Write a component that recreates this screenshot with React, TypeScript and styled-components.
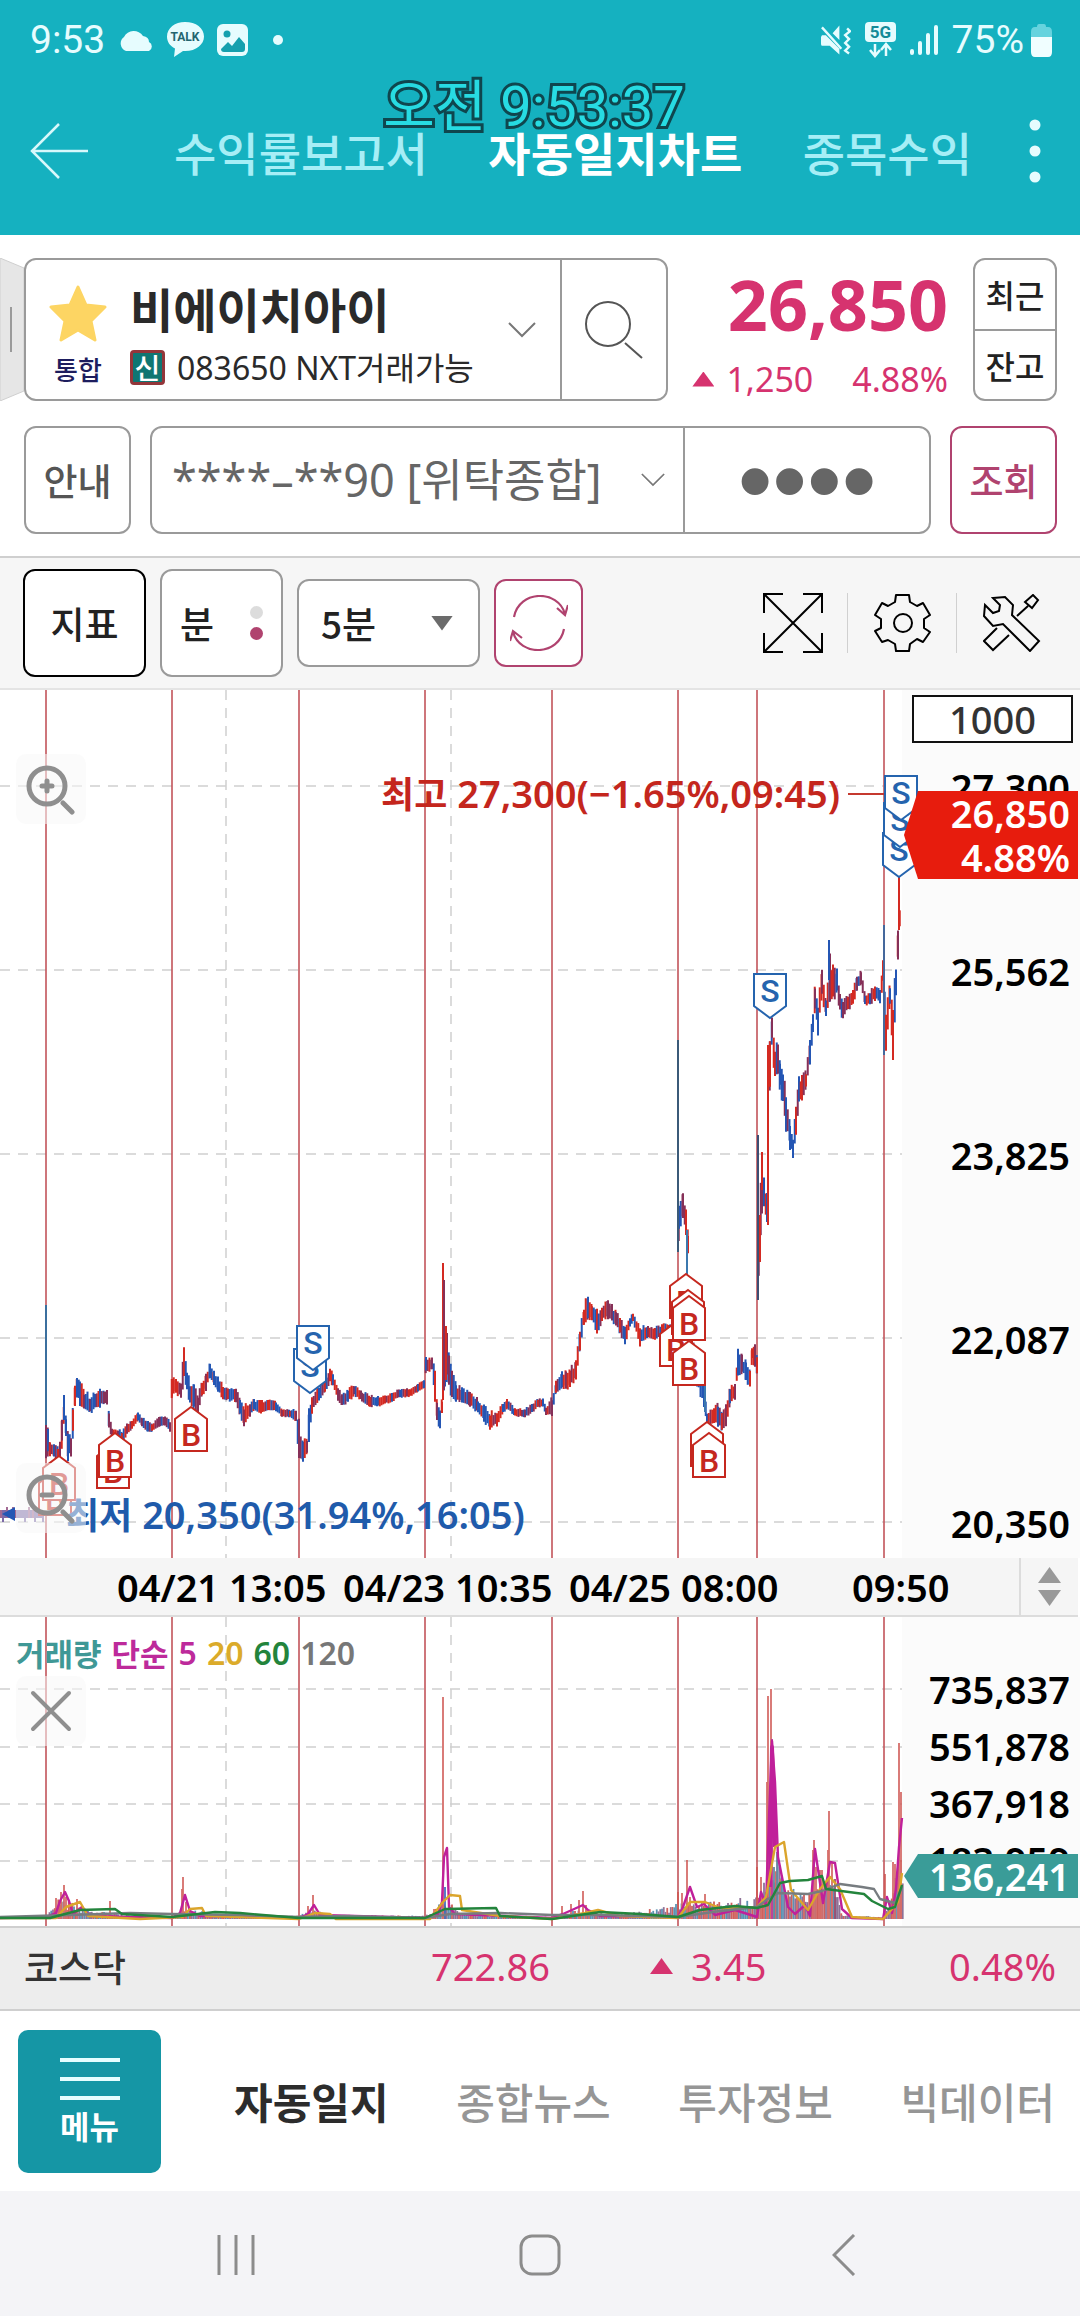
import React from "react";
import styled, { createGlobalStyle, css } from "styled-components";

const SANS = `"Noto Sans", "Noto Sans CJK KR", sans-serif`;
const KR = `"Noto Sans CJK KR", "Noto Sans", sans-serif`;
const PINK = "#d6336f";
const ROSE = "#b0436f";
const GREY = "#9a9a9a";

const GlobalStyle = createGlobalStyle`
  * { box-sizing: border-box; }
  body { margin: 0; background: #fff; font-family: ${SANS}; color: #222; }
  button, input, select { font: inherit; color: inherit; margin: 0; padding: 0; border: 0; background: none; border-radius: 0; appearance: none; outline: none; }
  a { color: inherit; text-decoration: none; }
  svg { display: block; }
`;

const Screen = styled.div`
  display: flex;
  flex-direction: column;
  min-height: 100vh;
  overflow: hidden;
`;

/* ---------- header ---------- */
const Header = styled.header`
  position: relative;
  background: #15b1c0;
  color: #fff;
  height: 235px;
  display: flex;
  flex-direction: column;
`;
const StatusBar = styled.div`
  display: flex;
  align-items: center;
  justify-content: space-between;
  height: 80px;
  padding: 0 28px 0 30px;
  font: 39px/44px Roboto, sans-serif;
  color: #e6fcfe;
`;
const StatusGroup = styled.div<{ $gap: number }>`
  display: flex;
  align-items: center;
  gap: ${(p) => p.$gap}px;
`;
const BatteryText = styled.span`
  display: flex;
  align-items: center;
  gap: 7px;
`;
const TopNav = styled.nav`
  display: flex;
  align-items: center;
  height: 142px;
  padding: 0 26px 0 30px;
`;
const TopTabs = styled.div`
  flex: 1;
  display: flex;
  justify-content: space-between;
  padding: 0 44px 0 86px;
`;
const TopTab = styled.a<{ $active?: boolean }>`
  font: ${(p) => (p.$active ? 700 : 500)} 46px/60px ${KR};
  color: ${(p) => (p.$active ? "#fff" : "#a6eef6")};
  white-space: nowrap;
`;
const IconButton = styled.button`
  display: grid;
  place-items: center;
  cursor: pointer;
`;
const ClockOverlay = styled.time`
  position: absolute;
  top: 73px;
  left: 50%;
  transform: translateX(-50%);
  margin-left: -6px;
  font: 400 56px/68px Roboto, "Noto Sans CJK KR", sans-serif;
  color: #27dbe2;
  -webkit-text-stroke: 6px #0f464e;
  paint-order: stroke fill;
  white-space: nowrap;
`;

/* ---------- stock and account ---------- */
const StockRow = styled.section`
  position: relative;
  display: flex;
  align-items: stretch;
  height: 143px;
  margin: 23px 23px 0 24px;
`;
const DrawerHandle = styled.button`
  position: absolute;
  left: -24px;
  top: 0;
  width: 24px;
  height: 143px;
`;
const Framed = styled.div`
  display: flex;
  border: 2px solid ${GREY};
  border-radius: 12px;
  background: #fff;
  overflow: hidden;
`;
const StockCard = styled(Framed)`
  flex: 0 1 644px;
  z-index: 1;
`;
const Favourite = styled.button`
  display: flex;
  flex-direction: column;
  align-items: center;
  width: 104px;
  padding-top: 25px;
  gap: 11px;
  font: 500 26px/32px ${KR};
  color: #1d1d5e;
`;
const StockButton = styled.button`
  flex: 1;
  display: flex;
  align-items: center;
  text-align: left;
  padding-right: 24px;
`;
const StockNames = styled.span`
  flex: 1;
  display: flex;
  flex-direction: column;
  gap: 8px;
  padding-top: 4px;
`;
const StockName = styled.span`
  font: 700 47px/64px ${KR};
  color: #2a2a2a;
`;
const StockCode = styled.span`
  display: flex;
  align-items: center;
  gap: 12px;
  font: 400 32px/40px ${SANS};
  color: #2a2a2a;
  white-space: nowrap;
`;
const CreditBadge = styled.span`
  width: 35px;
  height: 35px;
  border: 3px solid #93363a;
  border-radius: 4px;
  background: #0f7672;
  color: #fff;
  font: 500 28px/29px ${KR};
  text-align: center;
`;
const SearchButton = styled(IconButton)`
  width: 106px;
  border-left: 2px solid ${GREY};
`;
const PriceBlock = styled.div`
  flex: 1;
  display: flex;
  flex-direction: column;
  align-items: flex-end;
  padding-right: 25px;
  color: ${PINK};
`;
const Price = styled.strong`
  font: 700 70px/92px ${SANS};
`;
const Change = styled.div`
  display: flex;
  align-items: center;
  gap: 39px;
  font: 400 34px/58px ${SANS};
`;
const ChangeValue = styled.span`
  display: flex;
  align-items: center;
  gap: 12px;
`;
const Triangle = styled.i<{ $size: number; $color?: string; $down?: boolean }>`
  width: ${(p) => p.$size}px;
  height: ${(p) => Math.round(p.$size * 0.7)}px;
  background: ${(p) => p.$color || PINK};
  clip-path: ${(p) => (p.$down ? "polygon(0 0, 100% 0, 50% 100%)" : "polygon(50% 0, 100% 100%, 0 100%)")};
`;
const SideButtons = styled(Framed)`
  width: 84px;
  flex-direction: column;
  font: 500 32px/40px ${KR};
`;
const SideButton = styled.button`
  flex: 1;
  & + & { border-top: 2px solid ${GREY}; }
`;
const AccountRow = styled.section`
  display: flex;
  height: 108px;
  gap: 19px;
  margin: 25px 23px 22px 24px;
`;
const OutlineButton = styled.button<{ $color: string; $text?: string }>`
  width: 107px;
  border: 2px solid ${(p) => p.$color};
  border-radius: 12px;
  background: #fff;
  color: ${(p) => p.$text || p.$color};
  font: 500 37px/48px ${KR};
`;
const AccountBox = styled(Framed)`
  flex: 1;
`;
const SelectWrap = styled.label`
  flex: 1;
  display: flex;
  align-items: center;
  padding: 0 18px 0 20px;
`;
const AccountSelect = styled.select`
  flex: 1;
  min-width: 0;
  font: 400 45px/60px ${SANS};
  color: #666;
`;
const Password = styled.input`
  width: 246px;
  border-left: 2px solid ${GREY};
  text-align: center;
  font: 99px/104px "Liberation Sans", sans-serif;
  color: #666;
`;

/* ---------- toolbar ---------- */
const Toolbar = styled.section`
  display: flex;
  align-items: center;
  justify-content: space-between;
  height: 134px;
  padding: 0 39px 0 23px;
  background: #f6f6f6;
  border-top: 2px solid #cfcfcf;
  border-bottom: 2px solid #e4e4e4;
`;
const ToolGroup = styled.div`
  display: flex;
  align-items: center;
  gap: 14px;
`;
const ToolButton = styled.button<{ $color: string }>`
  display: flex;
  align-items: center;
  justify-content: center;
  gap: 36px;
  width: 123px;
  height: 108px;
  border: 2px solid ${(p) => p.$color};
  border-radius: 12px;
  background: #fff;
  font: 500 37px/48px ${KR};
`;
const Dots = styled.span`
  display: grid;
  gap: 8px;
`;
const Dot = styled.i<{ $on?: boolean }>`
  width: 13px;
  height: 13px;
  border-radius: 50%;
  background: ${(p) => (p.$on ? ROSE : "#dcdcdc")};
`;
const PeriodBox = styled.label`
  display: flex;
  align-items: center;
  width: 183px;
  height: 88px;
  padding: 0 25px 0 22px;
  border: 2px solid ${GREY};
  border-radius: 12px;
  background: #fff;
`;
const PeriodSelect = styled.select`
  flex: 1;
  min-width: 0;
  font: 500 37px/48px ${KR};
`;
const RefreshButton = styled(IconButton)`
  width: 89px;
  height: 88px;
  border: 2px solid ${ROSE};
  border-radius: 12px;
  background: #fff;
`;
const Actions = styled.div`
  display: flex;
  align-items: center;
`;
const Action = styled(IconButton)`
  height: 60px;
  & + & {
    border-left: 1px solid #d0d0d0;
    margin-left: 24px;
    padding-left: 26px;
  }
`;

/* ---------- charts ---------- */
const ChartRow = styled.section`
  position: relative;
  display: flex;
  background: #fbfbfb;
`;
const Plot = styled.svg`
  flex: 1;
  min-width: 0;
  height: auto;
  overflow: visible;
  background: #fff;
`;
const AxisCss = css`
  position: relative;
  flex: 0 0 178px;
  display: flex;
  flex-direction: column;
  align-items: flex-end;
  padding-right: 10px;
  font: 600 38px/44px ${SANS};
  color: #000;
`;
const PriceAxis = styled.div`
  ${AxisCss}
  padding-top: 5px;
  gap: 140px;
`;
const VolumeAxis = styled.div`
  ${AxisCss}
  padding-top: 50px;
  gap: 13px;
`;
const CountInput = styled.input`
  width: 161px;
  height: 48px;
  margin: 0 -3px -118px 0;
  border: 2px solid #111;
  background: #fff;
  text-align: center;
  font: 500 38px/44px ${SANS};
  color: #333;
`;
const Tag = styled.div<{ $top: number; $bg: string }>`
  position: absolute;
  top: ${(p) => p.$top}px;
  left: 2px;
  right: 2px;
  padding-right: 8px;
  background: ${(p) => p.$bg};
  color: #fff;
  text-align: right;
  clip-path: polygon(0 50%, 14px 0, 100% 0, 100% 100%, 14px 100%);
`;
const ChartTool = styled.button<{ $top: number }>`
  position: absolute;
  left: 16px;
  top: ${(p) => p.$top}px;
  width: 70px;
  height: 70px;
  display: grid;
  place-items: center;
  border-radius: 10px;
  background: rgba(247, 247, 247, 0.55);
`;
const DateBar = styled.div`
  display: flex;
  align-items: center;
  height: 59px;
  padding-left: 117px;
  margin-right: 2px;
  background: #f5f5f5;
  border-bottom: 2px solid #dcdcdc;
  font: 600 38px/56px ${SANS};
  color: #000;
`;
const DateLabel = styled.span<{ $width: number }>`
  width: ${(p) => p.$width}px;
  white-space: nowrap;
`;
const Stepper = styled.button`
  margin-left: auto;
  width: 59px;
  height: 100%;
  border-left: 2px solid #dcdcdc;
  display: flex;
  flex-direction: column;
  align-items: center;
  justify-content: center;
  gap: 7px;
`;
const Legend = styled.div`
  position: absolute;
  top: 14px;
  left: 16px;
  display: flex;
  gap: 10px;
  font: 600 32px/44px ${SANS};
`;
const LegendItem = styled.span<{ $color: string; $bold?: boolean }>`
  color: ${(p) => p.$color};
  ${(p) => p.$bold && `font: 700 31px/44px ${KR};`}
`;

/* ---------- footer ---------- */
const IndexBar = styled.section`
  display: grid;
  grid-template-columns: 407px 219px 1fr auto;
  align-items: center;
  height: 85px;
  padding: 0 24px 5px;
  background: #ededed;
  border-top: 2px solid #cfcfcf;
  border-bottom: 2px solid #cfcfcf;
  font: 400 38px/52px ${SANS};
  color: ${PINK};
`;
const IndexName = styled.span`
  font: 500 37px/52px ${KR};
  color: #333;
`;
const IndexChange = styled.span`
  display: flex;
  align-items: center;
  gap: 18px;
`;
const BottomNav = styled.nav`
  display: flex;
  align-items: center;
  height: 180px;
  padding: 0 25px 0 18px;
`;
const MenuButton = styled.button`
  width: 143px;
  height: 143px;
  border-radius: 10px;
  background: #1596a5;
  color: #fff;
  display: flex;
  flex-direction: column;
  align-items: center;
  justify-content: center;
  gap: 4px;
  font: 700 32px/40px ${KR};
`;
const BottomTabs = styled.div`
  flex: 1;
  display: flex;
  justify-content: space-between;
  padding-left: 73px;
`;
const BottomTab = styled.a<{ $active?: boolean }>`
  font: ${(p) => (p.$active ? 700 : 500)} 42px/60px ${KR};
  color: ${(p) => (p.$active ? "#2c2c2c" : "#969696")};
`;
const SystemNav = styled.nav`
  flex: 1;
  min-height: 126px;
  display: grid;
  grid-template-columns: repeat(3, 1fr);
  align-items: center;
  padding: 2px 84px 0;
  background: #f4f4f7;
`;

/* ---------- chart data ---------- */
const SESSIONS = [46, 172, 299, 425, 552, 678, 757, 884];
const RED = "#d42a22";
const BLUE = "#2456b4";
const PURPLE = "#863058";

// x, high, low of the price envelope
const ENVELOPE: number[][] = [
  [46, 732, 772], [48, 740, 765], [50, 752, 766], [54, 755, 765], [58, 758, 770], [60, 750, 770], [62, 730, 755], [64, 712, 730],
  [66, 722, 750], [68, 745, 770], [71, 745, 765], [73, 710, 750], [75, 695, 715], [77, 686, 710], [80, 690, 715], [84, 700, 720],
  [90, 705, 725], [95, 703, 720], [100, 698, 716], [104, 702, 715], [107, 700, 715], [109, 722, 740], [112, 740, 750], [118, 742, 750],
  [122, 740, 755], [127, 735, 742], [132, 732, 738], [138, 722, 730], [142, 728, 735], [148, 732, 740], [152, 735, 740], [160, 728, 735],
  [165, 728, 734], [170, 732, 740], [172, 685, 705], [176, 688, 702], [181, 690, 710], [184, 658, 690], [187, 680, 702], [190, 692, 715],
  [194, 695, 720], [198, 705, 722], [202, 692, 705], [206, 682, 700], [210, 674, 688], [214, 682, 694], [218, 688, 700], [223, 695, 710],
  [228, 698, 710], [236, 698, 712], [240, 710, 725], [244, 715, 735], [250, 715, 725], [254, 710, 720], [262, 712, 722], [268, 710, 718],
  [276, 712, 720], [282, 720, 725], [290, 721, 726], [296, 720, 730], [299, 730, 770], [303, 750, 770], [307, 750, 762], [309, 720, 750],
  [312, 705, 722], [325, 690, 700], [330, 678, 692], [333, 682, 695], [338, 698, 710], [342, 705, 715], [348, 700, 712], [354, 695, 705],
  [362, 702, 710], [370, 706, 716], [378, 708, 715], [385, 707, 713], [392, 704, 710], [400, 700, 706], [410, 700, 705], [418, 696, 700],
  [424, 690, 698], [426, 668, 680], [432, 668, 680], [435, 680, 710], [437, 710, 730], [440, 715, 740], [442, 710, 722], [445, 640, 700],
  [447, 645, 690], [449, 662, 700], [452, 680, 710], [456, 695, 710], [462, 698, 712], [470, 702, 715], [478, 710, 722], [484, 715, 732],
  [490, 722, 738], [497, 722, 735], [503, 715, 722], [507, 710, 717], [515, 720, 725], [525, 720, 726], [532, 715, 722], [538, 710, 715],
  [543, 710, 716], [546, 718, 725], [552, 708, 725], [556, 692, 702], [562, 680, 698], [566, 682, 698], [570, 678, 698], [576, 672, 690],
  [580, 640, 660], [584, 615, 635], [588, 604, 628], [592, 615, 630], [597, 620, 645], [602, 615, 630], [608, 612, 628], [612, 615, 630],
  [616, 622, 636], [620, 628, 642], [625, 638, 655], [630, 628, 635], [633, 625, 630], [640, 636, 655], [648, 638, 646], [655, 638, 650],
  [662, 635, 645], [670, 635, 642], [677, 630, 640], [679, 510, 540], [683, 505, 530], [686, 520, 545], [688, 540, 570], [690, 640, 680],
  [704, 690, 715], [707, 722, 735], [718, 712, 735], [722, 722, 740], [726, 715, 740], [730, 695, 715], [735, 690, 710], [738, 660, 685],
  [742, 665, 682], [746, 672, 690], [750, 680, 698], [752, 655, 670], [755, 652, 678], [757, 665, 685], [759, 525, 572], [762, 465, 525],
  [764, 485, 525], [767, 500, 530], [768, 360, 430], [770, 335, 410], [772, 325, 350], [775, 355, 395], [778, 348, 385], [780, 370, 400],
  [783, 372, 415], [786, 405, 440], [790, 430, 460], [793, 447, 467], [796, 415, 445], [799, 385, 415], [802, 385, 410], [806, 380, 398],
  [810, 350, 375], [813, 320, 340], [815, 290, 320], [818, 310, 345], [822, 280, 310], [826, 305, 330], [830, 265, 310], [833, 270, 310],
  [837, 278, 305], [840, 305, 320], [843, 310, 330], [848, 305, 320], [853, 300, 315], [857, 285, 300], [861, 282, 295], [865, 305, 315],
  [870, 302, 313], [875, 295, 310], [880, 300, 312], [883, 270, 295], [886, 320, 360], [890, 290, 320], [893, 310, 360], [896, 270, 310],
  [898, 235, 270], [901, 195, 225],
];

// x, high, low, colour of the long single bars
const SPIKES: [number, number, number, string][] = [
  [46, 615, 735, "#3b6f9e"], [64, 705, 730, BLUE], [443, 573, 710, RED], [444, 590, 700, PURPLE], [446, 636, 690, RED],
  [678, 350, 562, "#3b5a78"], [687, 540, 585, "#3b78ae"], [705, 695, 722, "#3b78ae"], [758, 445, 610, "#3d4d72"], [760, 525, 572, RED],
  [768, 355, 535, RED], [762, 462, 500, RED], [829, 250, 290, BLUE], [884, 235, 365, "#45689c"], [893, 320, 370, RED], [899, 185, 240, RED],
];

const noise = (seed: number) => {
  const v = Math.sin(seed * 127.1 + 11.7) * 43758.5453;
  return v - Math.floor(v);
};

type Bar = { x: number; y1: number; y2: number; color: string };

const candles: Bar[] = [];
for (let i = 0; i < ENVELOPE.length - 1; i++) {
  const [x0, h0, l0] = ENVELOPE[i];
  const [x1, h1, l1] = ENVELOPE[i + 1];
  for (let x = x0; x < x1; x += 1.75) {
    const t = (x - x0) / (x1 - x0);
    const high = h0 + (h1 - h0) * t;
    const low = l0 + (l1 - l0) * t;
    const r = noise(x + i);
    const size = low - high;
    const a = high - 2 + size * 0.35 * noise(x * 3 + 1);
    const b = low + 2 - size * 0.3 * noise(x * 5 + 2);
    const falling = h1 > h0 + 2;
    const color = r < 0.3 ? PURPLE : r < (falling ? 0.5 : 0.72) ? RED : BLUE;
    candles.push({ x, y1: a, y2: Math.max(b, a + 4), color });
  }
}
for (let x = 1; x < 45; x += 2) {
  candles.push({ x, y1: 820 + (noise(x) > 0.8 ? -3 : 0), y2: 828 + (noise(x) < 0.2 ? 4 : 0), color: noise(x) > 0.5 ? "#a36a94" : "#7c6aa8" });
}

type Mark = [kind: "B" | "S", x: number, tip: number];
const MARKS: Mark[] = [
  ["B", 55, 781], ["B", 59, 766], ["B", 113, 754], ["B", 115, 743], ["B", 191, 717],
  ["S", 310, 703], ["S", 313, 680],
  ["B", 676, 632], ["B", 686, 584], ["B", 688, 600], ["B", 689, 606], ["B", 689, 651], ["B", 707, 732], ["B", 709, 743],
  ["S", 770, 328], ["S", 899, 187], ["S", 900, 157], ["S", 901, 130],
];

const TradeMark = ({ mark: [kind, x, tip] }: { mark: Mark }) => {
  const buy = kind === "B";
  const s = buy ? 1 : -1;
  const color = buy ? "#c5281f" : "#2564ae";
  return (
    <g>
      <path
        d={`M${x} ${tip}L${x + 16} ${tip + s * 12}V${tip + s * 44}H${x - 16}V${tip + s * 12}Z`}
        fill="#fff"
        stroke={color}
        strokeWidth={2}
      />
      <text x={x} y={buy ? tip + 39 : tip - 16} textAnchor="middle" fontSize={32} fontWeight={500} fontFamily="Roboto, sans-serif" fill={color}>
        {kind}
      </text>
    </g>
  );
};

const Grid = ({ rows, height }: { rows: number[]; height: number }) => (
  <>
    <g stroke="#cfcfcf" strokeWidth={1.5} strokeDasharray="10 8">
      {rows.map((y) => <path key={y} d={`M0 ${y}H902`} />)}
      {[226, 451].map((x) => <path key={x} d={`M${x} 0V${height}`} />)}
    </g>
    <g stroke="#c2545a" strokeWidth={1.6}>
      {SESSIONS.map((x) => <path key={x} d={`M${x} 0V${height}`} />)}
    </g>
  </>
);

const PriceChart = () => (
  <Plot viewBox="0 0 902 868" role="img" aria-label="비에이치아이 5분 차트">
    <Grid rows={[96, 280, 464, 648, 832]} height={868} />
    <g strokeWidth={2}>
      {candles.map((c, i) => <path key={i} d={`M${c.x} ${c.y1}V${c.y2}`} stroke={c.color} />)}
      {SPIKES.map(([x, a, b, color], i) => <path key={i} d={`M${x} ${a}V${b}`} stroke={color} />)}
    </g>
    {MARKS.map((m, i) => <TradeMark key={i} mark={m} />)}
    <path d="M848 104H884" stroke="#c5392f" strokeWidth={2} />
    <path d="M2 824L15 817V831Z" fill={BLUE} />
    <g fontSize={38} fontWeight={600} fontFamily={SANS}>
      <text x={840} y={118} textAnchor="end" fill="#c4261d">
        <tspan fontWeight={700} fontSize={36}>최고</tspan> 27,300(−1.65%,09:45)
      </text>
      <text x={66} y={839} fill="#1f5bab">
        <tspan fontWeight={700} fontSize={36}>최저</tspan> 20,350(31.94%,16:05)
      </text>
    </g>
  </Plot>
);

// x, top of the tall volume bars
const VOLUME: [number, number, string?][] = [
  [56, 281], [59, 288], [61, 275], [64, 268], [66, 280], [70, 290], [77, 282], [110, 284], [182, 272], [183, 260], [186, 285],
  [308, 289], [313, 278], [434, 292], [443, 80], [445, 270, BLUE], [562, 289], [571, 287], [579, 283], [583, 274], [586, 288], [678, 275], [682, 276],
  [687, 243], [690, 280], [705, 277], [710, 287], [737, 287], [757, 250], [761, 260], [764, 285], [767, 165], [768, 79], [771, 72], [772, 122, "#b0208f"],
  [774, 250, "#4f7590"], [777, 235, "#4f7590"], [780, 262], [813, 233], [814, 223], [816, 250], [820, 253], [822, 253], [828, 233],
  [829, 194], [832, 245], [835, 262, PURPLE], [885, 257], [893, 245], [895, 247], [898, 250], [899, 126], [901, 175],
];

const volumeFloor: Bar[] = [];
const FLOOR = [[46, 2], [60, 20], [90, 8], [130, 4], [172, 3], [190, 10], [215, 5], [299, 3], [313, 10], [330, 4], [425, 3], [445, 18], [465, 5], [552, 2], [575, 8], [620, 4], [678, 14], [700, 16], [757, 22], [776, 68], [790, 30], [812, 24], [830, 50], [836, 28], [842, 4], [883, 2], [890, 22], [901, 60], [903, 60]];
for (let i = 0; i < FLOOR.length - 1; i++) {
  const [x0, a] = FLOOR[i];
  const [x1, b] = FLOOR[i + 1];
  for (let x = x0; x < x1; x += 1.75) {
    const h = (a + ((b - a) * (x - x0)) / (x1 - x0)) * (0.5 + noise(x) * 0.6);
    const r = noise(x * 7);
    volumeFloor.push({ x, y1: 302 - h, y2: 302, color: r < 0.35 ? "#c8453f" : r < 0.6 ? "#3f7fa6" : "#7c5a86" });
  }
}

const VolumeChart = () => (
  <Plot viewBox="0 0 902 309" role="img" aria-label="거래량 차트">
    <Grid rows={[72, 130, 187, 244]} height={309} />
    <g strokeWidth={1.8} opacity={0.85}>
      {volumeFloor.map((c, i) => <path key={i} d={`M${c.x} ${c.y1}V${c.y2}`} stroke={c.color} />)}
      {VOLUME.map(([x, y, color], i) => <path key={i} d={`M${x} ${y}V302`} stroke={color || "#cf5550"} />)}
    </g>
    <g fill="none" strokeWidth={2.4} strokeLinejoin="round">
      <path stroke="#c0209a" d="M0 301L46 300L56 296L60 284L65 275L69 284L73 297L82 290L90 299L172 301L180 296L185 278L190 294L200 299L299 301L308 297L314 288L320 298L425 301L438 297L442 285L444 240L447 231L449 290L455 297L552 301L563 297L583 288L588 293L600 299L678 300L683 290L690 270L697 290L704 287L715 298L735 293L757 300L761 275L766 288L769 200L772 124L775 165L778 240L788 290L795 297L805 288L810 299L815 232L823 286L830 245L835 246L842 292L852 301L883 302L887 280L892 296L896 272L899 230L902 201" />
      <path stroke="#c0209a" strokeWidth={4} d="M770 270L772 130L775 230" />
      <path stroke="#dba52c" d="M0 301H56L66 290L80 285L88 299L140 302L182 300L190 292L202 291L206 299L299 302L315 296L330 297L336 302L430 302L443 285L450 278L460 279L462 293L500 299L552 302L585 296L598 293L620 299L678 301L690 285L705 285L720 291L757 290L766 280L775 230L784 225L791 273L808 293L820 272L830 260L840 272L852 300L883 302L893 291L898 285L902 256" />
      <path stroke="#777c80" d="M0 300L70 298L130 296L172 297L240 298L299 300L345 299L425 301L450 297L500 296L552 298L600 298L678 300L720 294L757 290L768 282L778 276L808 277L822 274L840 267L862 270L874 272L880 282L895 286L902 270" />
      <path stroke="#23843c" d="M0 301H50L80 293L115 292L122 297L172 300L215 295L240 296L299 301L425 301L445 292L496 291L500 299L552 302L600 295L640 297L678 300L700 293L735 289L757 291L768 288L780 266L790 264L808 263L822 259L826 272L864 277L872 284L888 292L895 290L902 268" />
    </g>
  </Plot>
);

const Magnifier = ({ plus }: { plus?: boolean }) => (
  <svg width="52" height="52" viewBox="0 0 52 52" fill="none" stroke="#8f8f8f" strokeWidth="5" strokeLinecap="round">
    <circle cx="22" cy="23" r="18" />
    <path d={`M17 23H27${plus ? "M22 18V28" : ""}M38 40L47 49`} />
  </svg>
);

const Chevron = ({ size }: { size: number }) => (
  <svg width={size} height={size / 2 + 2} viewBox="0 0 28 16" fill="none" stroke="#777" strokeWidth="2">
    <path d="M1 1L14 14L27 1" />
  </svg>
);

export default function App() {
  return (
    <Screen>
      <GlobalStyle />
      <Header>
        <StatusBar>
          <StatusGroup $gap={13}>
            <span>9:53</span>
            <svg width="36" height="22" viewBox="0 0 36 22" fill="#e6fcfe"><path d="M8 22A8 8 0 0 1 6 8A11 11 0 0 1 25 7Q31 8 31 13A5 5 0 0 1 31 22Z" /></svg>
            <svg width="37" height="36" viewBox="0 0 37 36">
              <path d="M18 0C8 0 0 6 0 14.500C0 20 3 24 8 26.500L7 35L16 29C28 30 37 23 37 14.500C37 6 29 0 18 0Z" fill="#e6fcfe" />
              <text x="18" y="19" textAnchor="middle" fontSize="12" fontWeight="700" fontFamily="Roboto, sans-serif" fill="#22656f">TALK</text>
            </svg>
            <svg width="31" height="32" viewBox="0 0 31 32">
              <rect width="31" height="32" rx="6" fill="#e6fcfe" />
              <circle cx="10" cy="10" r="3.500" fill="#15a0ae" />
              <path d="M4 25L11 18L15 22L22 13L28 20V25Q28 28 25 28H7Q4 28 4 25Z" fill="#15a0ae" />
            </svg>
            <svg width="38" height="12" viewBox="0 0 38 12"><circle cx="17" cy="6" r="5" fill="#e6fcfe" /></svg>
          </StatusGroup>
          <StatusGroup $gap={14}>
            <svg width="30" height="30" viewBox="0 0 31 30" fill="#e6fcfe">
              <path d="M1 10H5L19 24V30L9 21H1Q0 21 0 19V12ZM12 8L19 0V15Z" />
              <path d="M1 2L21 24M27 3L30 6L25 10L29 14L25 18L29 22L25 26L29 29" fill="none" stroke="#e6fcfe" strokeWidth="2.500" />
            </svg>
            <svg width="31" height="36" viewBox="0 0 31 36">
              <rect width="31" height="20" rx="4" fill="#e6fcfe" />
              <text x="15.500" y="16" textAnchor="middle" fontSize="17" fontWeight="700" fontFamily="Roboto, sans-serif" fill="#138b98">5G</text>
              <path d="M10 22V33M5 28L10 34L15 28M21 34V23M16 28L21 22L26 28" fill="none" stroke="#e6fcfe" strokeWidth="2.500" />
            </svg>
            <svg width="28" height="30" viewBox="0 0 28 30" stroke="#e6fcfe" strokeWidth="4" strokeLinecap="round"><path d="M2 26V28M10 18V28M18 10V28M26 2V28" /></svg>
            <BatteryText>
              75%
              <svg width="21" height="33" viewBox="0 0 21 33">
                <path d="M6 3Q6 0 8 0H13Q15 0 15 3H17Q21 3 21 8V14H0V8Q0 3 4 3Z" fill="#66d3de" />
                <path d="M0 13H21V28Q21 33 17 33H4Q0 33 0 28Z" fill="#f0feff" />
              </svg>
            </BatteryText>
          </StatusGroup>
        </StatusBar>
        <TopNav>
          <IconButton aria-label="뒤로">
            <svg width="58" height="56" viewBox="0 0 58 56" fill="none" stroke="#d8f8fb" strokeWidth="2.500"><path d="M29 1L2 28L29 55M2 28H58" /></svg>
          </IconButton>
          <TopTabs>
            <TopTab href="#report">수익률보고서</TopTab>
            <TopTab href="#chart" $active>자동일지차트</TopTab>
            <TopTab href="#profit">종목수익</TopTab>
          </TopTabs>
          <IconButton aria-label="더보기">
            <svg width="38" height="64" viewBox="0 0 38 64" fill="#e6fcfe"><circle cx="19" cy="6" r="5.500" /><circle cx="19" cy="32" r="5.500" /><circle cx="19" cy="58" r="5.500" /></svg>
          </IconButton>
        </TopNav>
        <ClockOverlay>오전 9:53:37</ClockOverlay>
      </Header>

      <StockRow>
        <DrawerHandle aria-label="서랍 열기">
          <svg width="24" height="143" viewBox="0 0 24 143"><path d="M0 0L24 10V133L0 143Z" fill="#e6e6e6" stroke="#cfcfcf" /><path d="M11 49V94" stroke="#9a9a9a" strokeWidth="2" /></svg>
        </DrawerHandle>
        <StockCard>
          <Favourite>
            <svg width="58" height="57" viewBox="0 0 58 57" fill="#fdd563" stroke="#fdd563" strokeWidth="3" strokeLinejoin="round"><path d="M29 2L37 20L56 22L42 36L46 55L29 45L12 55L16 36L2 22L21 20Z" /></svg>
            통합
          </Favourite>
          <StockButton>
            <StockNames>
              <StockName>비에이치아이</StockName>
              <StockCode><CreditBadge>신</CreditBadge>083650 NXT거래가능</StockCode>
            </StockNames>
            <Chevron size={28} />
          </StockButton>
          <SearchButton aria-label="검색">
            <svg width="60" height="60" viewBox="0 0 60 60" fill="none" stroke="#555" strokeWidth="2"><circle cx="24" cy="24" r="22" /><path d="M41 43L58 58" /></svg>
          </SearchButton>
        </StockCard>
        <PriceBlock>
          <Price>26,850</Price>
          <Change>
            <ChangeValue><Triangle $size={22} />1,250</ChangeValue>
            <span>4.88%</span>
          </Change>
        </PriceBlock>
        <SideButtons>
          <SideButton>최근</SideButton>
          <SideButton>잔고</SideButton>
        </SideButtons>
      </StockRow>

      <AccountRow>
        <OutlineButton $color={GREY} $text="#555">안내</OutlineButton>
        <AccountBox>
          <SelectWrap>
            <AccountSelect aria-label="계좌"><option>****–**90 [위탁종합]</option></AccountSelect>
            <Chevron size={24} />
          </SelectWrap>
          <Password type="password" aria-label="비밀번호" defaultValue="0000" />
        </AccountBox>
        <OutlineButton $color={ROSE}>조회</OutlineButton>
      </AccountRow>

      <Toolbar>
        <ToolGroup>
          <ToolButton $color="#000">지표</ToolButton>
          <ToolButton $color={GREY}>분<Dots><Dot /><Dot $on /></Dots></ToolButton>
          <PeriodBox>
            <PeriodSelect aria-label="주기"><option>5분</option></PeriodSelect>
            <Triangle $size={22} $color="#6b6b6b" $down />
          </PeriodBox>
          <RefreshButton aria-label="새로고침">
            <svg width="58" height="56" viewBox="0 0 58 56" fill="none" stroke={ROSE} strokeWidth="2.200"><path d="M4 22C9 -5 48 -6 55 19M47 13L55 20L58 10M54 34C49 61 10 62 3 37M0 46L3 36L12 43" /></svg>
          </RefreshButton>
        </ToolGroup>
        <Actions>
          <Action aria-label="전체화면">
            <svg width="60" height="60" viewBox="0 0 60 60" fill="none" stroke="#000" strokeWidth="2"><path d="M1 20V1H20M40 1H59V20M59 40V59H40M20 59H1V40M1 1L59 59M59 1L1 59" /></svg>
          </Action>
          <Action aria-label="설정">
            <svg width="58" height="58" viewBox="0 0 58 58" fill="none" stroke="#000" strokeWidth="2" strokeLinejoin="round"><path d="M22 1H35L36 8L43 12L49 9L56 21L50 25V34L56 38L49 48L43 45L36 50L35 57H22L21 50L14 46L8 48L1 37L7 34V25L1 21L8 9L14 12L21 8Z" /><circle cx="29" cy="29" r="9" /></svg>
          </Action>
          <Action aria-label="도구">
            <svg width="58" height="58" viewBox="0 0 58 58" fill="none" stroke="#000" strokeWidth="2"><path d="M10 4L22 3L30 11L29 21L56 47L47 57L20 30L10 32L1 22L2 11L10 19L16 17L17 11ZM14 34L1 47L10 56L26 41M34 22L45 12M42 8L50 1L55 6L49 14Z" /></svg>
          </Action>
        </Actions>
      </Toolbar>

      <ChartRow>
        <PriceChart />
        <PriceAxis>
          <CountInput aria-label="봉 개수" defaultValue="1000" />
          <span>27,300</span>
          <span>25,562</span>
          <span>23,825</span>
          <span>22,087</span>
          <span>20,350</span>
          <Tag $top={101} $bg="#e71c0d">26,850<br />4.88%</Tag>
        </PriceAxis>
        <ChartTool $top={64} aria-label="확대"><Magnifier plus /></ChartTool>
        <ChartTool $top={773} aria-label="축소"><Magnifier /></ChartTool>
      </ChartRow>

      <DateBar>
        <DateLabel $width={226}>04/21 13:05</DateLabel>
        <DateLabel $width={226}>04/23 10:35</DateLabel>
        <DateLabel $width={283}>04/25 08:00</DateLabel>
        <DateLabel $width={100}>09:50</DateLabel>
        <Stepper aria-label="차트 높이 조절">
          <Triangle $size={23} $color="#999" />
          <Triangle $size={23} $color="#999" $down />
        </Stepper>
      </DateBar>

      <ChartRow>
        <VolumeChart />
        <VolumeAxis>
          <span>735,837</span>
          <span>551,878</span>
          <span>367,918</span>
          <span>183,959</span>
          <Tag $top={237} $bg="#3a9c98">136,241</Tag>
        </VolumeAxis>
        <Legend>
          <LegendItem $color="#3f9896" $bold>거래량</LegendItem>
          <LegendItem $color="#bd2a9b" $bold>단순</LegendItem>
          <LegendItem $color="#bd2a9b">5</LegendItem>
          <LegendItem $color="#dbab2a">20</LegendItem>
          <LegendItem $color="#23843c">60</LegendItem>
          <LegendItem $color="#777">120</LegendItem>
        </Legend>
        <ChartTool $top={59} aria-label="닫기">
          <svg width="42" height="42" viewBox="0 0 42 42" stroke="#8f8f8f" strokeWidth="4" strokeLinecap="round"><path d="M3 3L39 39M39 3L3 39" /></svg>
        </ChartTool>
      </ChartRow>

      <IndexBar>
        <IndexName>코스닥</IndexName>
        <span>722.86</span>
        <IndexChange><Triangle $size={23} />3.45</IndexChange>
        <span>0.48%</span>
      </IndexBar>

      <BottomNav>
        <MenuButton>
          <svg width="60" height="44" viewBox="0 0 60 44" stroke="#e6feff" strokeWidth="4"><path d="M0 3H60M0 22H60M0 41H60" /></svg>
          메뉴
        </MenuButton>
        <BottomTabs>
          <BottomTab href="#journal" $active>자동일지</BottomTab>
          <BottomTab href="#news">종합뉴스</BottomTab>
          <BottomTab href="#info">투자정보</BottomTab>
          <BottomTab href="#bigdata">빅데이터</BottomTab>
        </BottomTabs>
      </BottomNav>

      <SystemNav>
        <IconButton aria-label="최근 앱">
          <svg width="38" height="42" viewBox="0 0 38 42" stroke="#8c8c8c" strokeWidth="3"><path d="M2 1V41M19 1V41M36 1V41" /></svg>
        </IconButton>
        <IconButton aria-label="홈">
          <svg width="42" height="42" viewBox="0 0 42 42" fill="none" stroke="#8c8c8c" strokeWidth="3"><rect x="2" y="2" width="38" height="38" rx="11" /></svg>
        </IconButton>
        <IconButton aria-label="이전">
          <svg width="24" height="42" viewBox="0 0 24 42" fill="none" stroke="#8c8c8c" strokeWidth="3"><path d="M22 1L2 21L22 41" /></svg>
        </IconButton>
      </SystemNav>
    </Screen>
  );
}
